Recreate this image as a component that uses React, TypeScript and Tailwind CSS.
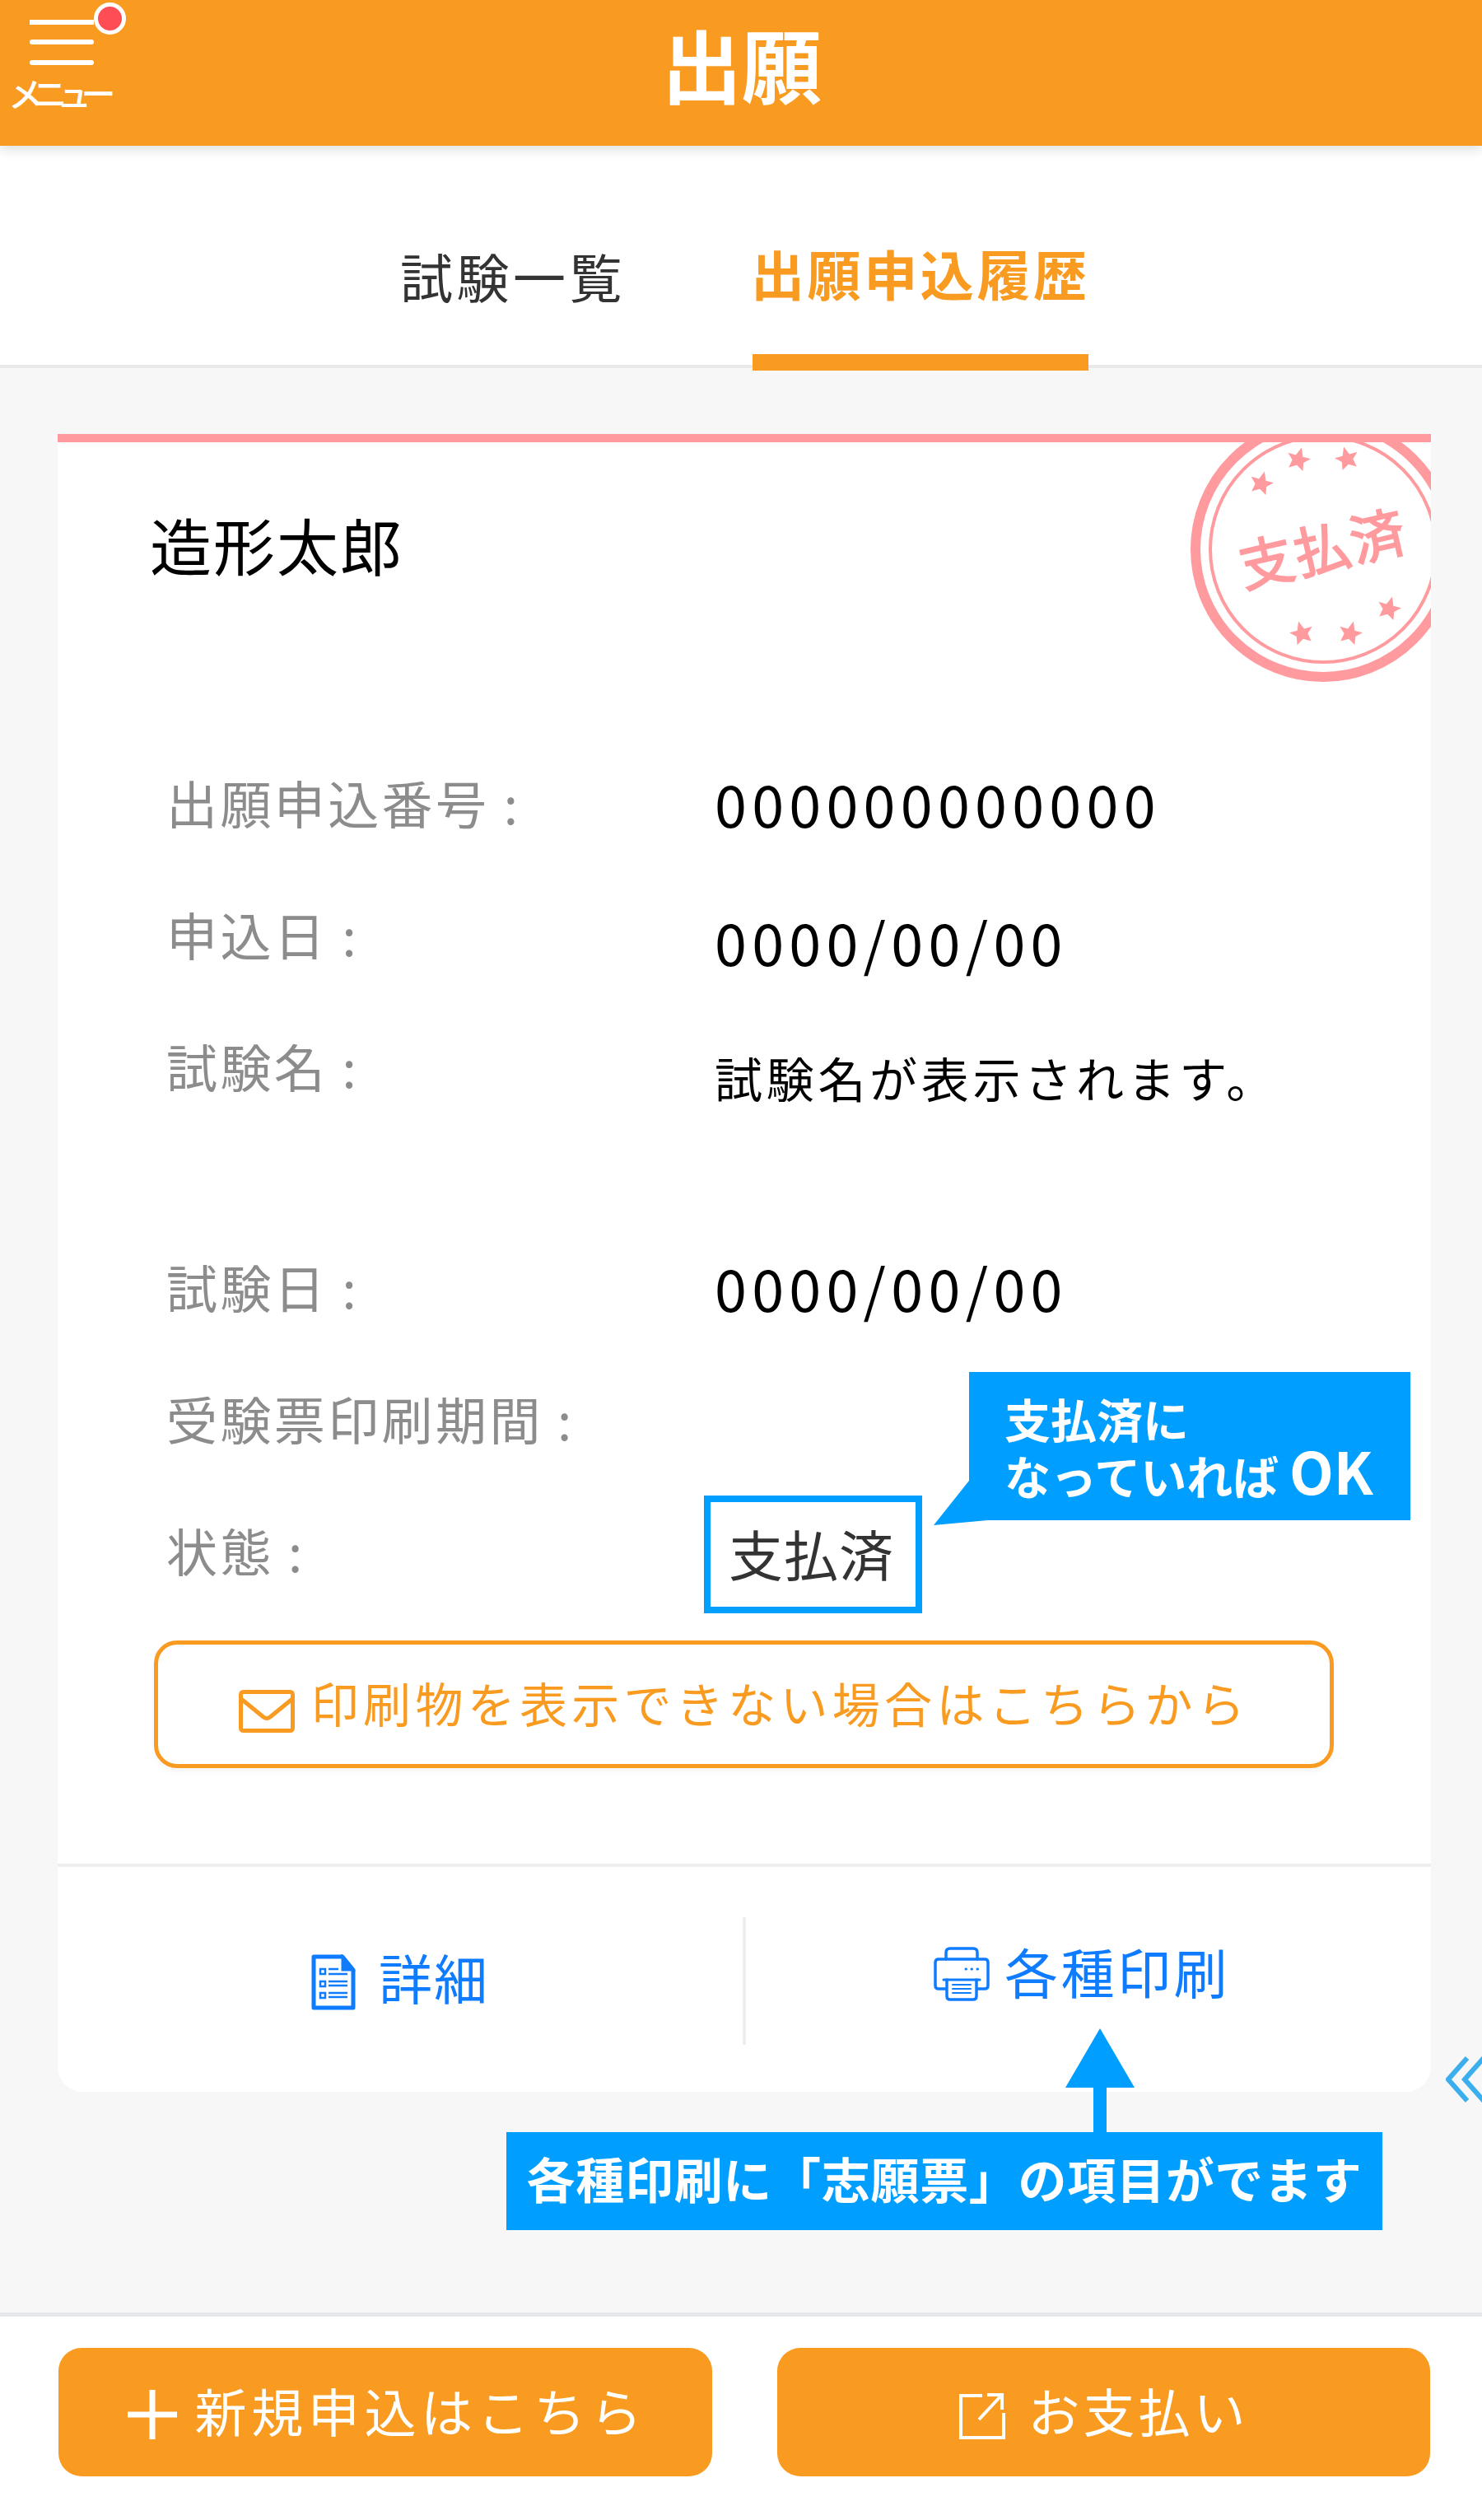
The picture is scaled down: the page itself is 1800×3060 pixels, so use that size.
import React from "react";

const rows = [
  { label: "出願申込番号 :", value: "000000000000" },
  { label: "申込日 :", value: "0000/00/00" },
];

function MenuIcon() {
  return (
    <div className="relative w-[150px] h-[150px]">
      <div className="absolute left-[36px] top-[24px] w-[78px] h-[6px] bg-white" />
      <div className="absolute left-[36px] top-[48px] w-[78px] h-[6px] rounded-full bg-white" />
      <div className="absolute left-[36px] top-[73px] w-[78px] h-[6px] rounded-full bg-white" />
      <div className="absolute left-[114px] top-[3px] w-[39px] h-[39px] rounded-full bg-[#ff4d55] border-[5px] border-white" />
      <div className="absolute left-[10px] top-[85px] text-[42px] leading-[54px] tracking-[-12.5px] text-white whitespace-nowrap font-medium">
        メニュー
      </div>
    </div>
  );
}

function Stamp() {
  const stars = [
    [131, 52, 15],
    [190, 51, -15],
    [86, 81, 15],
    [241, 233, 15],
    [135, 263, -15],
    [194, 263, 15],
  ];
  return (
    <svg width="340" height="340" viewBox="0 0 340 340" className="absolute left-[1376px] top-[-31px]">
      <circle cx="161" cy="161" r="155" fill="none" stroke="#ff9a9e" strokeWidth="12" />
      <circle cx="161" cy="161" r="137" fill="none" stroke="#ff9a9e" strokeWidth="4" />
      {stars.map(([x, y, r]) => (
        <polygon
          key={`${x}-${y}`}
          transform={`translate(${x} ${y}) rotate(${r}) scale(1.5)`}
          points="0,-10 2.9,-3.1 9.5,-3.1 4.7,1.5 5.9,8.1 0,4.6 -5.9,8.1 -4.7,1.5 -9.5,-3.1 -2.9,-3.1"
          fill="#ff9a9e"
        />
      ))}
      <text
        x="161"
        y="185"
        textAnchor="middle"
        fontSize="66"
        letterSpacing="3"
        fontWeight="400"
        fill="#ff9a9e"
        stroke="#ff9a9e"
        strokeWidth="2"
        transform="rotate(-13 161 161)"
      >
        支払済
      </text>
    </svg>
  );
}

function DocIcon() {
  return (
    <svg width="54" height="68" viewBox="0 0 54 68" fill="none" stroke="#0f7cff">
      <path d="M3 3h35l13 16v46H3z" strokeWidth="5" strokeLinejoin="round" />
      <path d="M38 3l13 16H38z" fill="#0f7cff" strokeWidth="3" />
      <rect x="11" y="18" width="6" height="6" strokeWidth="2.5" />
      <rect x="11" y="33" width="6" height="6" strokeWidth="2.5" />
      <rect x="11" y="47" width="6" height="6" strokeWidth="2.5" />
      <path d="M21 18h12M21 24h23M21 33h23M21 38h23M21 47h23M21 52h23" strokeWidth="2.5" />
    </svg>
  );
}

function PrinterIcon() {
  return (
    <svg width="68" height="66" viewBox="0 0 68 66" fill="none" stroke="#0f7cff" strokeLinecap="round" strokeLinejoin="round">
      <path d="M15 15V7q0-5 5-5h28q5 0 5 5v8" strokeWidth="3.5" />
      <path d="M14 51H6q-4 0-4-4V19q0-4 4-4h56q4 0 4 4v28q0 4-4 4h-8" strokeWidth="3.5" />
      <path d="M12 40h44" strokeWidth="3" />
      <path d="M16 40v20q0 4 4 4h28q4 0 4-4V40" strokeWidth="3.5" />
      <path d="M23 46h22M23 51h22M23 56h22" strokeWidth="2" />
      <path d="M39 27h.5M46 27h.5M53 27h.5" strokeWidth="3" />
    </svg>
  );
}

function MailIcon() {
  return (
    <svg width="68" height="52" viewBox="0 0 68 52" fill="none" stroke="#f99b20" strokeWidth="5" strokeLinejoin="round">
      <rect x="2.5" y="2.5" width="63" height="47" rx="3" />
      <path d="M3 11l27 22q4 3 8 0l27-22" />
    </svg>
  );
}

function ExternalIcon() {
  return (
    <svg width="56" height="58" viewBox="0 0 56 58" fill="none" stroke="#ffffff" strokeWidth="4">
      <path d="M28 5H2v51h52V26" />
      <path d="M24 34L50 6M34 4h18v18" />
    </svg>
  );
}

export default function App() {
  return (
    <div className="relative w-[1800px] h-[3060px] flex flex-col bg-[#f7f7f7] overflow-hidden font-['Noto_Sans_CJK_JP','Noto_Sans',sans-serif]">
      <header className="relative z-10 flex items-center justify-center h-[177px] pb-[26px] pl-[2px] bg-[#f99b20] shadow-[0_4px_14px_rgba(0,0,0,0.14)]">
        <div className="absolute left-0 top-0">
          <MenuIcon />
        </div>
        <div className="text-[97px] leading-none font-bold text-white">出願</div>
      </header>

      <nav className="flex justify-center gap-[160px] h-[270px] pl-[2px] pt-[106px] bg-white border-b-4 border-[#e9e9e9]">
        <div className="ml-[4px] flex items-start pt-[6px] w-[268px] text-[64px] leading-[90px] tracking-[4.5px] text-[#333333] whitespace-nowrap">
          試験一覧
        </div>
        <div className="relative -ml-[2px] w-[408px] text-[65px] leading-[96px] tracking-[3.6px] font-bold text-[#f99b20] whitespace-nowrap">
          出願申込履歴
          <div className="absolute left-[2px] right-[-2px] top-[147px] h-[20px] bg-[#f99b20]" />
        </div>
      </nav>

      <main className="flex-1 px-[62px] pt-[80px]">
        <section className="relative w-[1668px] h-[2013px] ml-[8px] rounded-b-[30px] bg-white border-t-[10px] border-[#ff9a9e] overflow-hidden">
          <Stamp />
          <div className="flex items-center h-[248px] pl-[112px] text-[75px] tracking-[2px] text-black">造形太郎</div>
          <div className="mt-[109px] pl-[132px] text-[62px] text-[#8c8c8c]">
            {rows.map((row, i) => (
              <div key={row.label} className="grid grid-cols-[666px_1fr] items-center h-[160px]">
                <div className="tracking-[3.4px]">{row.label}</div>
                <div className={`text-[70px] tracking-[6.3px] text-black ${i === 1 ? "pt-[16px]" : ""}`}>{row.value}</div>
              </div>
            ))}
            <div className="grid grid-cols-[666px_1fr] h-[268px]">
              <div className="flex items-center h-[160px] tracking-[3.4px]">試験名 :</div>
              <div className="flex items-center h-[188px] text-[58px] tracking-[4.7px] text-black">
                試験名が表示されます。
              </div>
            </div>
            <div className="grid grid-cols-[666px_1fr] items-center h-[160px]">
              <div className="tracking-[3.4px]">試験日 :</div>
              <div className="text-[70px] tracking-[6.3px] text-black">0000/00/00</div>
            </div>
            <div className="flex items-center w-fit h-[160px] tracking-[3.4px]">受験票印刷期間 :</div>
            <div className="grid grid-cols-[653px_1fr] items-center h-[160px]">
              <div className="tracking-[3.4px]">状態 :</div>
              <div className="flex items-center justify-center w-[265px] h-[143px] mt-[10px] pb-[4px] pr-[4px] border-[8px] border-[#009eff] text-[66px] tracking-[1px] text-[#333333]">
                支払済
              </div>
            </div>
          </div>

          <button className="flex items-center justify-center gap-[20px] w-[1433px] h-[155px] mt-[30px] ml-[117px] rounded-[28px] border-[5px] border-[#f99b20] bg-white text-[58px] tracking-[5.3px] text-[#f99b20] shadow-[0_4px_8px_rgba(0,0,0,0.04)]">
            <span className="mt-[16px]">
              <MailIcon />
            </span>
            <span className="-mt-[4px]">印刷物を表示できない場合はこちらから</span>
          </button>

          <div className="flex h-[274px] mt-[116px] border-t-4 border-[#eeeeee]">
            <div className="flex justify-center gap-[28px] w-[832px] pt-[106px] text-[65px] leading-[68px] text-[#0f7cff]">
              <DocIcon />
              <span className="-mt-[7px] tracking-[2px]">詳細</span>
            </div>
            <div className="w-[4px] h-[155px] mt-[61px] bg-[#eeeeee]" />
            <div className="flex justify-center gap-[18px] w-[832px] pr-[16px] pt-[97px] text-[65px] leading-[68px] text-[#0f7cff]">
              <PrinterIcon />
              <span className="-mt-[5px] tracking-[3.5px]">各種印刷</span>
            </div>
          </div>
        </section>
      </main>

      <footer className="flex justify-between h-[252px] pl-[71px] pr-[63px] pt-[38px] bg-white border-t-[5px] border-[#e5e7eb]">
        <button className="flex items-center justify-center gap-[22px] w-[794px] h-[156px] rounded-[28px] bg-[#f99b20] pl-[4px] text-[63px] tracking-[5.6px] text-white">
          <svg width="60" height="60" viewBox="0 0 60 60" className="mt-[6px]">
            <path d="M0 30h60M30 0v60" stroke="#ffffff" strokeWidth="7" />
          </svg>
          <span className="-mt-[6px]">新規申込はこちら</span>
        </button>
        <button className="flex items-center justify-center gap-[28px] w-[793px] h-[156px] rounded-[28px] bg-[#f99b20] text-[63px] tracking-[4px] text-white">
          <span className="mt-[8px]">
            <ExternalIcon />
          </span>
          <span className="-mt-[6px]">お支払い</span>
        </button>
      </footer>

      {/* annotations over the page */}
      <div className="absolute left-[1134px] top-[1666px] w-[580px] h-[186px]">
        <svg width="580" height="186" viewBox="0 0 580 186" className="absolute inset-0">
          <path d="M43 0H579V180H66L0 186L43 132z" fill="#009eff" />
        </svg>
        <div className="absolute left-[86px] top-[24px] text-[56px] leading-[63px] font-bold text-white whitespace-nowrap">
          支払済に
          <br />
          なっていれば <span className="text-[70px] leading-[63px]">OK</span>
        </div>
      </div>

      <div className="absolute left-[1294px] top-[2463px] flex flex-col items-center w-[84px]">
        <svg width="84" height="72" viewBox="0 0 84 72">
          <path d="M42 0L84 72H0z" fill="#009eff" />
        </svg>
        <div className="w-[16px] h-[54px] bg-[#009eff]" />
      </div>
      <div className="absolute left-[615px] top-[2589px] flex items-center justify-center w-[1064px] h-[119px] pb-[6px] bg-[#009eff] text-[59px] font-bold tracking-[0.7px] text-white whitespace-nowrap">
        各種印刷に「志願票」の項目がでます
      </div>

      <svg width="44" height="56" viewBox="0 0 44 56" className="absolute left-[1756px] top-[2497px]" fill="none" stroke="#3baeee" strokeWidth="6">
        <path d="M26 2L3 28l23 26M46 2L23 28l23 26" />
      </svg>
    </div>
  );
}
